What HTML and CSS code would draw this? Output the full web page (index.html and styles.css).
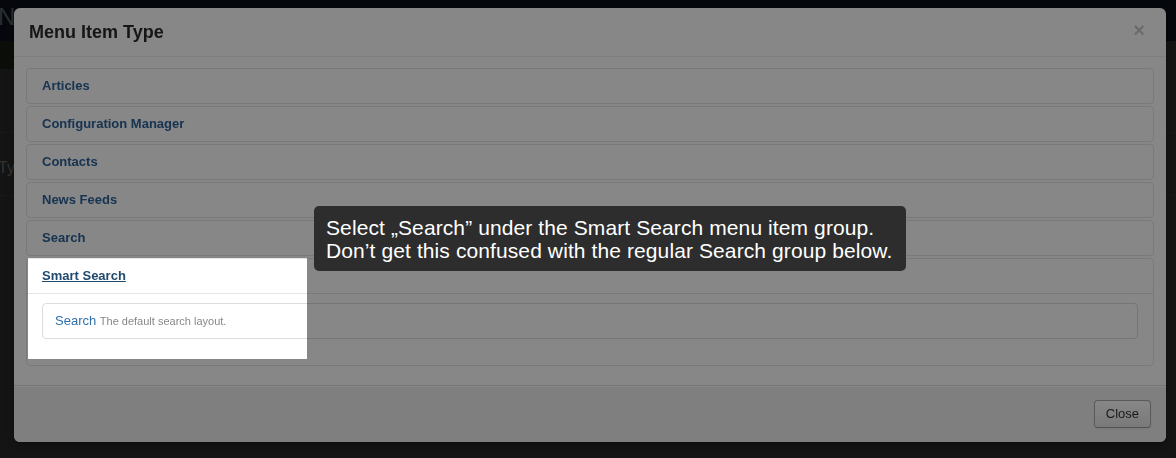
FILE: index.html
```html
<!DOCTYPE html>
<html lang="en">

<head>
    <meta charset="UTF-8">
    <meta name="viewport" content="width=device-width, initial-scale=1.0">
    <title>Menu Item Type</title>
    <link rel="stylesheet" href="styles.css">
</head>

<body>
    <!-- page behind the modal -->
    <div class="page">
        <div class="topbar"><span class="brand">N</span></div>
        <div class="subhead"><span class="btn-save"></span></div>
        <div class="page-body">
            <div class="page-row"></div>
            <div class="page-row"><span class="page-label">Type</span></div>
        </div>
    </div>

    <div class="modal">
        <div class="modal-header">
            <button type="button" class="close">&times;</button>
            <h3>Menu Item Type</h3>
        </div>
        <div class="modal-body">
            <div class="accordion">
                <div class="accordion-group">
                    <div class="accordion-heading"><a href="#" class="accordion-toggle">Articles</a></div>
                </div>
                <div class="accordion-group">
                    <div class="accordion-heading"><a href="#" class="accordion-toggle">Configuration Manager</a></div>
                </div>
                <div class="accordion-group">
                    <div class="accordion-heading"><a href="#" class="accordion-toggle">Contacts</a></div>
                </div>
                <div class="accordion-group">
                    <div class="accordion-heading"><a href="#" class="accordion-toggle">News Feeds</a></div>
                </div>
                <div class="accordion-group">
                    <div class="accordion-heading"><a href="#" class="accordion-toggle">Search</a></div>
                </div>
                <div class="accordion-group">
                    <div class="accordion-heading"><a href="#" class="accordion-toggle hover">Smart Search</a></div>
                    <div class="accordion-inner">
                        <ul class="nav-stacked">
                            <li><a href="#">Search <small class="muted">The default search layout.</small></a></li>
                        </ul>
                    </div>
                </div>
            </div>
        </div>
        <div class="modal-footer">
            <button type="button" class="btn">Close</button>
        </div>
    </div>

    <!-- tour step -->
    <div class="spotlight"></div>
    <div class="tour-tip">
        Select „Search” under the Smart Search menu item group.<br>
        Don’t get this confused with the regular Search group below.
    </div>
</body>

</html>
```

FILE: styles.css
```css
/* styles.css */

body {
    font-family: "Liberation Sans", Arial, sans-serif;
    font-size: 13px;
    line-height: 18px;
    color: #333;
    margin: 0;
    padding: 0;
    background-color: #262626;
    overflow: hidden;
}

/* page behind */

.topbar {
    height: 41px;
    background-color: #0a0f17;
}

.brand {
    display: inline-block;
    font-size: 24px;
    line-height: 34px;
    color: #4f565e;
    margin-left: -2px;
}

.subhead {
    height: 29px;
    background-color: #262626;
}

.btn-save {
    display: block;
    width: 40px;
    height: 28px;
    background-color: #151c10;
}

.page-row {
    height: 62px;
    border-bottom: 1px solid #2e2e2e;
}

.page-label {
    display: inline-block;
    margin-top: 26px;
    font-size: 16px;
    color: #5e5e5e;
    margin-left: -2px;
}

/* modal */

.modal {
    position: fixed;
    top: 8px;
    left: 14px;
    width: 1152px;
    background-color: #fff;
    border-radius: 6px;
    box-shadow: 0 3px 7px rgba(0, 0, 0, 0.3);
}

.modal-header {
    padding: 12px 15px;
    border-bottom: 1px solid #eee;
}

.modal-header h3 {
    margin: 0;
    font-size: 18px;
    line-height: 24px;
    font-weight: bold;
    color: #2b2b2b;
}

.close {
    float: right;
    margin: 1px 6px 0 0;
    padding: 0;
    border: 0;
    background: none;
    font-family: "Liberation Sans", Arial, sans-serif;
    font-size: 20px;
    font-weight: bold;
    line-height: 18px;
    color: #000;
    opacity: 0.2;
    text-shadow: 0 1px 0 #fff;
}

.modal-body {
    padding: 11px 12px 17px;
}

.accordion-group {
    margin-bottom: 2px;
    border: 1px solid #e5e5e5;
    border-radius: 4px;
}

.accordion-toggle {
    display: block;
    padding: 8px 15px;
    font-weight: bold;
    color: #2d6399;
    text-decoration: none;
}

.accordion-toggle.hover {
    color: #1f496e;
    text-decoration: underline;
}

.accordion-inner {
    padding: 9px 15px;
    border-top: 1px solid #e5e5e5;
}

.nav-stacked {
    list-style: none;
    margin: 0 0 17px;
    padding: 0;
}

.nav-stacked a {
    display: block;
    padding: 8px 12px;
    border: 1px solid #ddd;
    border-radius: 4px;
    color: #3071a9;
    text-decoration: none;
}

.muted {
    font-size: 11px;
    color: #888;
}

.modal-footer {
    padding: 14px 15px;
    text-align: right;
    background-color: #f0f0f0;
    border-top: 1px solid #ddd;
    border-radius: 0 0 6px 6px;
    box-shadow: inset 0 1px 0 #fff;
}

.btn {
    padding: 4px 11px;
    font-family: "Liberation Sans", Arial, sans-serif;
    font-size: 13px;
    line-height: 18px;
    color: #333;
    background-color: #f5f5f5;
    background-image: linear-gradient(to bottom, #fff, #e6e6e6);
    border: 1px solid #aaa;
    border-bottom-color: #999;
    border-radius: 4px;
    box-shadow: inset 0 1px 0 rgba(255, 255, 255, 0.2), 0 1px 2px rgba(0, 0, 0, 0.05);
}

/* tour */

.spotlight {
    position: absolute;
    top: 258px;
    left: 28px;
    width: 279px;
    height: 101px;
    box-shadow: 0 0 0 3000px rgba(0, 0, 0, 0.47);
}

.tour-tip {
    position: absolute;
    top: 206px;
    left: 314px;
    width: 568px;
    padding: 10px 12px 9px;
    font-size: 21px;
    line-height: 23px;
    letter-spacing: 0.1px;
    color: #fff;
    background-color: #2d2d2d;
    border-radius: 5px;
    white-space: nowrap;
}
```
